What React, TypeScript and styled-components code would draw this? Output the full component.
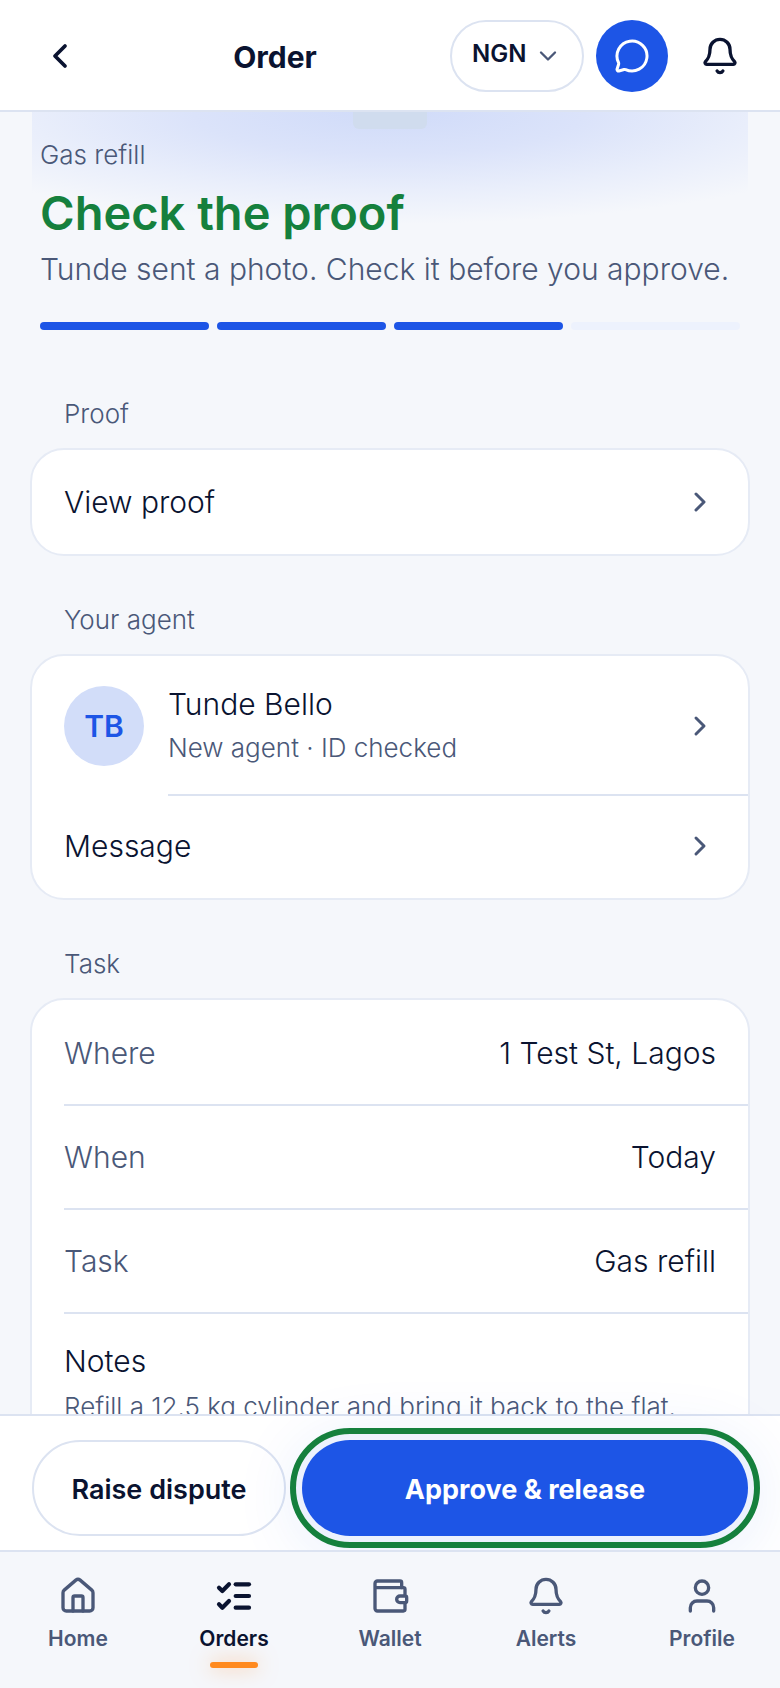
import React from "react";
import styled, { createGlobalStyle, css } from "styled-components";
import {
  Bell,
  ChevronDown,
  ChevronLeft,
  ChevronRight,
  House,
  ListChecks,
  MessageCircle,
  User,
} from "lucide-react";

const color = {
  page: "#f5f7fb",
  surface: "#ffffff",
  ink: "#0a1330",
  muted: "#4a5878",
  line: "#dce3f1",
  cardLine: "#e6ebf5",
  blue: "#1d55e6",
  blueSoft: "#d2ddf9",
  blueFaint: "#edf2fd",
  green: "#15803d",
  orange: "#ff8a1f",
};

const GlobalStyle = createGlobalStyle`
  *, *::before, *::after { box-sizing: border-box; }
  body {
    margin: 0;
    background: ${color.page};
    color: ${color.ink};
    font-family: Inter, "Liberation Sans", sans-serif;
    font-weight: 300;
  }
  h1, h2, p, dl, dt, dd { margin: 0; font-weight: inherit; }
  button, select { font: inherit; color: inherit; }
  a { color: inherit; text-decoration: none; }
`;

const Screen = styled.div`
  display: flex;
  flex-direction: column;
  height: 100vh;
`;

const Header = styled.header`
  display: flex;
  align-items: center;
  gap: 12px;
  flex: none;
  height: 112px;
  padding: 2px 20px 0;
  background: ${color.surface};
  border-bottom: 2px solid ${color.line};
`;

const IconButton = styled.button`
  display: grid;
  place-items: center;
  width: 80px;
  height: 72px;
  padding: 0;
  border: 0;
  background: none;
`;

const ChatButton = styled(IconButton)`
  width: 72px;
  border-radius: 50%;
  background: ${color.blue};
  color: ${color.surface};
`;

const HeaderTitle = styled.h1`
  flex: 1;
  padding-top: 2px;
  text-align: center;
  font-size: 30px;
  line-height: 40px;
  font-weight: 700;
`;

const Currency = styled.label`
  position: relative;
  display: block;

  svg {
    position: absolute;
    right: 22px;
    top: 22px;
    color: ${color.muted};
    pointer-events: none;
  }
`;

const CurrencySelect = styled.select`
  appearance: none;
  display: block;
  width: 134px;
  height: 72px;
  padding: 0 48px 6px 20px;
  border: 2px solid ${color.line};
  border-radius: 36px;
  background: ${color.surface};
  font-size: 24px;
  font-weight: 600;
`;

const Content = styled.main`
  flex: 1;
  min-height: 0;
  overflow: hidden;
  padding: 0 30px;
`;

const Hero = styled.section`
  margin: 0 2px;
  padding: 0 8px;
  background: radial-gradient(
      ellipse 516px 112px at 50% 0,
      #d0dbf9 0%,
      #dbe3fa 38%,
      #e9eefb 70%,
      ${color.page} 100%
    )
    no-repeat;
`;

const HeroMark = styled.div`
  width: 74px;
  height: 17px;
  margin: 0 auto;
  border-radius: 0 0 6px 6px;
  background: #d0dcee;
`;

const Eyebrow = styled.p`
  padding-top: 8px;
  color: ${color.muted};
  font-size: 26px;
  line-height: 36px;
`;

const Status = styled.h2`
  margin-top: 8px;
  color: ${color.green};
  font-size: 47px;
  line-height: 64px;
  font-weight: 600;
`;

const Summary = styled.p`
  margin-top: 4px;
  color: ${color.muted};
  font-size: 30px;
  line-height: 40px;
  white-space: nowrap;
`;

const Steps = styled.div`
  display: flex;
  gap: 8px;
  margin-top: 33px;
`;

const Step = styled.span<{ $done: boolean }>`
  flex: 1;
  height: 8px;
  border-radius: 4px;
  background: ${(p) => (p.$done ? color.blue : color.blueFaint)};
`;

const SectionLabel = styled.h2`
  padding: 0 34px;
  margin: 47px 0 17px;
  color: ${color.muted};
  font-size: 26px;
  line-height: 34px;

  ${Hero} + & {
    margin-top: 67px;
  }
`;

const Card = styled.section`
  overflow: hidden;
  border: 2px solid ${color.cardLine};
  border-radius: 34px;
  background: ${color.surface};
`;

const rowText = css`
  font-size: 30px;
  line-height: 40px;
`;

const LinkRow = styled.a`
  display: flex;
  align-items: center;
  gap: 24px;
  height: 104px;
  padding: 0 32px;
  ${rowText}

  svg {
    flex: none;
    margin-left: auto;
    color: ${color.muted};
  }
`;

const AgentRow = styled(LinkRow)`
  height: 138px;
  padding-top: 2px;
`;

const Avatar = styled.span`
  display: grid;
  place-items: center;
  width: 80px;
  height: 80px;
  border-radius: 50%;
  background: ${color.blueSoft};
  color: ${color.blue};
  font-size: 30px;
  font-weight: 600;
`;

const AgentText = styled.span`
  display: flex;
  flex-direction: column;
  gap: 4px;
`;

const SubText = styled.span`
  color: ${color.muted};
  font-size: 26px;
  line-height: 40px;
  white-space: nowrap;
`;

const Divider = styled.hr<{ $inset: number }>`
  height: 2px;
  margin: 0 0 -2px ${(p) => p.$inset}px;
  border: 0;
  background: ${color.line};
`;

const Details = styled.dl`
  ${rowText}
`;

const DetailRow = styled.div`
  display: flex;
  align-items: center;
  justify-content: space-between;
  height: 104px;
  padding: 2px 32px 0;
`;

const Term = styled.dt`
  color: ${color.muted};
`;

const NotesRow = styled.div`
  display: flex;
  flex-direction: column;
  gap: 6px;
  padding: 29px 32px;
`;

const ActionBar = styled.div`
  position: relative;
  display: flex;
  gap: 16px;
  flex: none;
  height: 136px;
  padding: 24px 32px 14px;
  background: ${color.surface};
  border-top: 2px solid ${color.line};
`;

const ActionButton = styled.button`
  height: 96px;
  padding: 2px 0 0;
  border: 2px solid ${color.line};
  border-radius: 48px;
  background: none;
  font-size: 27px;
  font-weight: 600;
  white-space: nowrap;
`;

const DisputeButton = styled(ActionButton)`
  flex: 0 0 254px;
`;

const ApproveButton = styled(ActionButton)`
  flex: 1;
  border: 0;
  background: ${color.blue};
  color: ${color.surface};
  font-weight: 700;
  outline: 6px solid ${color.green};
  outline-offset: 6px;
  box-shadow: 0 0 0 6px ${color.blueFaint}, 0 8px 72px rgba(29, 85, 230, 0.14);
`;

const TabBar = styled.nav`
  position: relative;
  display: flex;
  flex: none;
  height: 138px;
  background: ${color.page};
  border-top: 2px solid ${color.line};
`;

const Tab = styled.a<{ $active?: boolean }>`
  display: flex;
  flex: 1;
  flex-direction: column;
  align-items: center;
  gap: 8px;
  padding-top: 24px;
  color: ${(p) => (p.$active ? color.ink : color.muted)};
  font-size: 21px;
  line-height: 30px;
  font-weight: 600;

  &::after {
    content: "";
    width: 48px;
    height: 6px;
    border-radius: 3px;
    ${(p) =>
      p.$active &&
      css`
        background: ${color.orange};
        box-shadow: 0 0 20px rgba(255, 138, 31, 0.5);
      `}
  }
`;

const WalletIcon = () => (
  <svg
    width="40"
    height="40"
    viewBox="0 0 24 24"
    fill="none"
    stroke="currentColor"
    strokeWidth="2"
    strokeLinecap="round"
    strokeLinejoin="round"
    aria-hidden="true"
  >
    <path d="M19 7V4a1 1 0 0 0-1-1H4.500a1.500 1.500 0 0 0-1.500 1.500V19.500a1.500 1.500 0 0 0 1.500 1.500H20a1 1 0 0 0 1-1v-4" />
    <path d="M3.500 7H20a1 1 0 0 1 1 1v4h-3a2 2 0 0 0 0 4h3a1 1 0 0 0 1-1v-2a1 1 0 0 0-1-1" />
  </svg>
);

const steps = [true, true, true, false];

const details = [
  { term: "Where", value: "1 Test St, Lagos" },
  { term: "When", value: "Today" },
  { term: "Task", value: "Gas refill" },
];

export default function App() {
  return (
    <>
      <GlobalStyle />
      <Screen>
        <Header>
          <IconButton aria-label="Back">
            <ChevronLeft size={40} strokeWidth={2.25} />
          </IconButton>
          <HeaderTitle>Order</HeaderTitle>
          <Currency>
            <CurrencySelect aria-label="Currency" defaultValue="NGN">
              <option>NGN</option>
            </CurrencySelect>
            <ChevronDown size={28} />
          </Currency>
          <ChatButton aria-label="Chat">
            <MessageCircle size={36} />
          </ChatButton>
          <IconButton aria-label="Notifications">
            <Bell size={40} />
          </IconButton>
        </Header>

        <Content>
          <Hero>
            <HeroMark />
            <Eyebrow>Gas refill</Eyebrow>
            <Status>Check the proof</Status>
            <Summary>Tunde sent a photo. Check it before you approve.</Summary>
            <Steps role="img" aria-label="Step 3 of 4">
              {steps.map((done, i) => (
                <Step key={i} $done={done} />
              ))}
            </Steps>
          </Hero>

          <SectionLabel>Proof</SectionLabel>
          <Card>
            <LinkRow href="#proof">
              View proof
              <ChevronRight size={32} strokeWidth={2.25} />
            </LinkRow>
          </Card>

          <SectionLabel>Your agent</SectionLabel>
          <Card>
            <AgentRow href="#agent">
              <Avatar>TB</Avatar>
              <AgentText>
                <span>Tunde Bello</span>
                <SubText>New agent · ID checked</SubText>
              </AgentText>
              <ChevronRight size={32} strokeWidth={2.25} />
            </AgentRow>
            <Divider $inset={136} />
            <LinkRow href="#message">
              Message
              <ChevronRight size={32} strokeWidth={2.25} />
            </LinkRow>
          </Card>

          <SectionLabel>Task</SectionLabel>
          <Card>
            <Details>
              {details.map((d) => (
                <React.Fragment key={d.term}>
                  <DetailRow>
                    <Term>{d.term}</Term>
                    <dd>{d.value}</dd>
                  </DetailRow>
                  <Divider $inset={32} />
                </React.Fragment>
              ))}
              <NotesRow>
                <dt>Notes</dt>
                <SubText as="dd">
                  Refill a 12.5 kg cylinder and bring it back to the flat.
                </SubText>
              </NotesRow>
            </Details>
          </Card>
        </Content>

        <ActionBar>
          <DisputeButton>Raise dispute</DisputeButton>
          <ApproveButton>Approve &amp; release</ApproveButton>
        </ActionBar>

        <TabBar>
          <Tab href="#home">
            <House size={40} />
            Home
          </Tab>
          <Tab href="#orders" $active aria-current="page">
            <ListChecks size={40} strokeWidth={2.5} />
            Orders
          </Tab>
          <Tab href="#wallet">
            <WalletIcon />
            Wallet
          </Tab>
          <Tab href="#alerts">
            <Bell size={40} />
            Alerts
          </Tab>
          <Tab href="#profile">
            <User size={40} />
            Profile
          </Tab>
        </TabBar>
      </Screen>
    </>
  );
}
